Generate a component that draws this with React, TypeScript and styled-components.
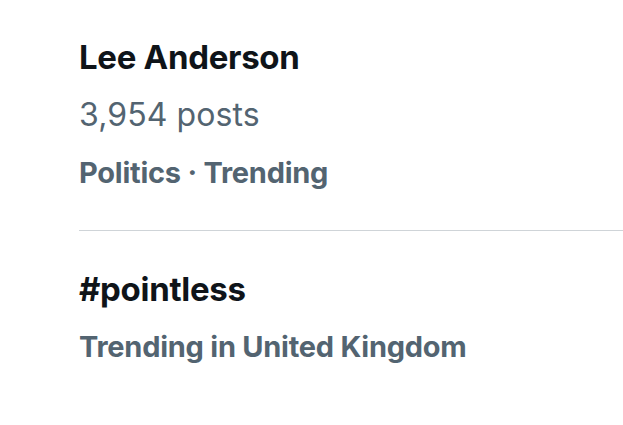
import React from "react";
import styled, { createGlobalStyle } from "styled-components";

const Global = createGlobalStyle`
  html, body { margin: 0; padding: 0; background: #ffffff; }
  body { font-family: Inter, "Noto Sans", "Liberation Sans", sans-serif; -webkit-font-smoothing: antialiased; }
`;

const List = styled.div`
  width: 623px;
  height: 425px;
  background: #ffffff;
  padding-left: 79px;
  box-sizing: border-box;
  overflow: hidden;
`;

const Item = styled.div<{ $top: number; $bottom: number; $divider?: boolean }>`
  display: flex;
  flex-direction: column;
  padding-top: ${(p) => p.$top}px;
  padding-bottom: ${(p) => p.$bottom}px;
  border-bottom: ${(p) => (p.$divider ? "1px solid #cfd4d8" : "none")};
`;

const Title = styled.div`
  font-size: 33px;
  font-weight: 700;
  line-height: 58px;
  color: #0f1419;
  letter-spacing: -0.3px;
`;

const Count = styled.div`
  font-size: 32px;
  font-weight: 400;
  line-height: 58px;
  color: #536471;
  letter-spacing: 0.1px;
`;

const Meta = styled.div`
  font-size: 29px;
  font-weight: 700;
  line-height: 58px;
  color: #536471;
  letter-spacing: -0.25px;
`;

export default function App() {
  return (
    <>
      <Global />
      <List>
        <Item $top={28} $bottom={28} $divider>
          <Title>Lee Anderson</Title>
          <Count>3,954 posts</Count>
          <Meta>Politics · Trending</Meta>
        </Item>
        <Item $top={29} $bottom={0}>
          <Title>#pointless</Title>
          <Meta>Trending in United Kingdom</Meta>
        </Item>
      </List>
    </>
  );
}
